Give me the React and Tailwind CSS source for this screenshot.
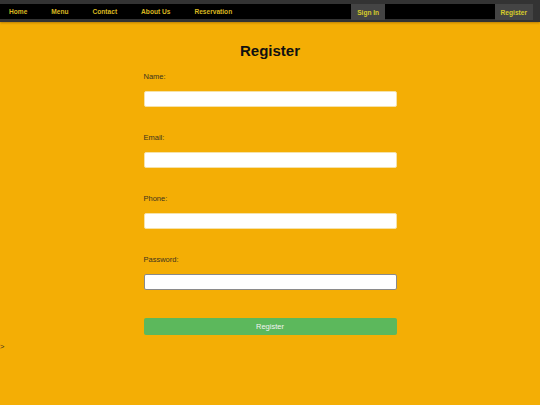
import React from "react";

const links = ["Home", "Menu", "Contact", "About Us", "Reservation"];
const fields = [
  { label: "Name:", type: "text" },
  { label: "Email:", type: "email" },
  { label: "Phone:", type: "tel" },
  { label: "Password:", type: "password" },
];

const App = () => {
  return (
    <div className="min-h-[405px] bg-[#f4ae05] font-['Liberation_Sans',Arial,sans-serif]">
      {/* Top navigation */}
      <nav className="flex h-[22px] bg-[#333] pt-[4px] text-[6.6px] leading-[15px] shadow-[0_1px_2px_rgba(120,70,0,0.45)]">
        <div className="flex h-[15px] flex-1 items-center bg-black pl-[9px]">
          <ul className="flex gap-[24px]">
            {links.map((l) => (
              <li key={l}>
                <a className="font-bold text-[#d9b820]">{l}</a>
              </li>
            ))}
          </ul>
          <button className="ml-[119px] flex h-[16px] self-start items-center bg-[#444] px-[6px] font-bold text-[#d6cc2a]">
            Sign In
          </button>
        </div>
        <button className="flex h-[16px] items-center bg-[#444] px-[6px] font-bold text-[#d6cc2a]">
          Register
        </button>
        <div className="w-[7px]"></div>
      </nav>

      {/* Register form */}
      <main className="flex flex-col items-center pt-[20px]">
        <h2 className="text-[15px] leading-[17px] font-bold text-[#111]">Register</h2>
        <form className="mt-[13px] flex w-[253px] flex-col">
          {fields.map((f, i) => (
            <div key={f.label} className={i > 0 ? "mt-[26px]" : ""}>
              <label className="block h-[9px] text-[7.5px] leading-[9px] text-[#3b3320]">
                {f.label}
              </label>
              <input
                type={f.type}
                className={`mt-[10px] block h-[16px] w-full rounded-[2px] bg-white ${
                  f.type === "password" ? "border border-[#8a8a8a]" : "border border-[#f6e2a8]"
                }`}
              />
            </div>
          ))}
          <button
            type="submit"
            className="mt-[28px] h-[17px] w-full rounded-[2px] bg-[#5cb85c] text-[7.5px] text-[#f2f2f2]"
          >
            Register
          </button>
        </form>
      </main>
      <p className="mt-[7px] text-[7.5px] leading-[9px] text-[#3b3320]">&gt;</p>
    </div>
  );
};

export default App;
